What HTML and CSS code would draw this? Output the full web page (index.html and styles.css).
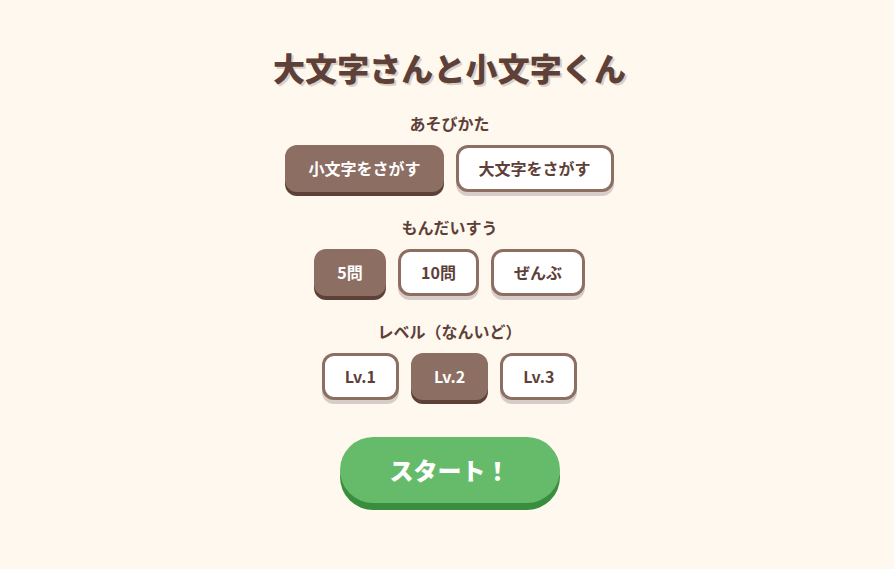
FILE: index.html
```html
<!DOCTYPE html>
<html lang="ja">
<head>
<meta charset="utf-8">
<title>大文字さんと小文字くん</title>
<link rel="stylesheet" href="styles.css">
</head>
<body>
<main class="screen">
  <h1 class="title">大文字さんと小文字くん</h1>
  <section class="group">
    <h2 class="label">あそびかた</h2>
    <div class="options">
      <button class="opt selected">小文字をさがす</button>
      <button class="opt">大文字をさがす</button>
    </div>
  </section>
  <section class="group">
    <h2 class="label">もんだいすう</h2>
    <div class="options">
      <button class="opt selected">5問</button>
      <button class="opt">10問</button>
      <button class="opt">ぜんぶ</button>
    </div>
  </section>
  <section class="group">
    <h2 class="label">レベル（なんいど）</h2>
    <div class="options">
      <button class="opt">Lv.1</button>
      <button class="opt selected">Lv.2</button>
      <button class="opt">Lv.3</button>
    </div>
  </section>
  <button class="start">スタート！</button>
</main>
</body>
</html>
```
FILE: styles.css
```css
html, body {
  margin: 0;
  padding: 0;
  background: #fff8ef;
}
body {
  min-height: 100vh;
  font-family: "Noto Sans CJK JP", "Noto Sans", sans-serif;
  color: #5d4037;
}
.screen {
  display: flex;
  flex-direction: column;
  align-items: center;
  padding: 45px 0 40px 5px;
}
.title {
  margin: 0;
  font-size: 32px;
  line-height: 44px;
  font-weight: 900;
  letter-spacing: 0.1px;
  color: #5d4037;
  text-shadow: 2px 2px 0 #dccfc6;
}
.group {
  display: flex;
  flex-direction: column;
  align-items: center;
  margin-top: 22px;
}
.group + .group {
  margin-top: 23px;
}
.label {
  margin: 0;
  font-size: 16px;
  line-height: 24px;
  font-weight: 700;
}
.options {
  display: flex;
  gap: 12px;
  margin-top: 10px;
}
.opt {
  box-sizing: border-box;
  height: 47px;
  min-width: 72px;
  font-family: inherit;
  font-size: 16px;
  font-weight: 700;
  line-height: 21px;
  padding: 0 20px;
  border: 3px solid #8d6e63;
  border-radius: 12px;
  background: #fff;
  color: #5d4037;
  box-shadow: 0 4px 0 #d7ccc8;
  cursor: pointer;
}
.opt.selected {
  background: #8d6e63;
  color: #fff;
  box-shadow: 0 4px 0 #5d4037;
}
.start {
  box-sizing: border-box;
  height: 66px;
  margin-top: 37px;
  font-family: inherit;
  font-size: 24px;
  font-weight: 900;
  line-height: 36px;
  padding: 0 50px;
  border: none;
  border-radius: 40px;
  background: #66bb6a;
  color: #fff;
  box-shadow: 0 7px 0 #388e3c;
  cursor: pointer;
}
```
